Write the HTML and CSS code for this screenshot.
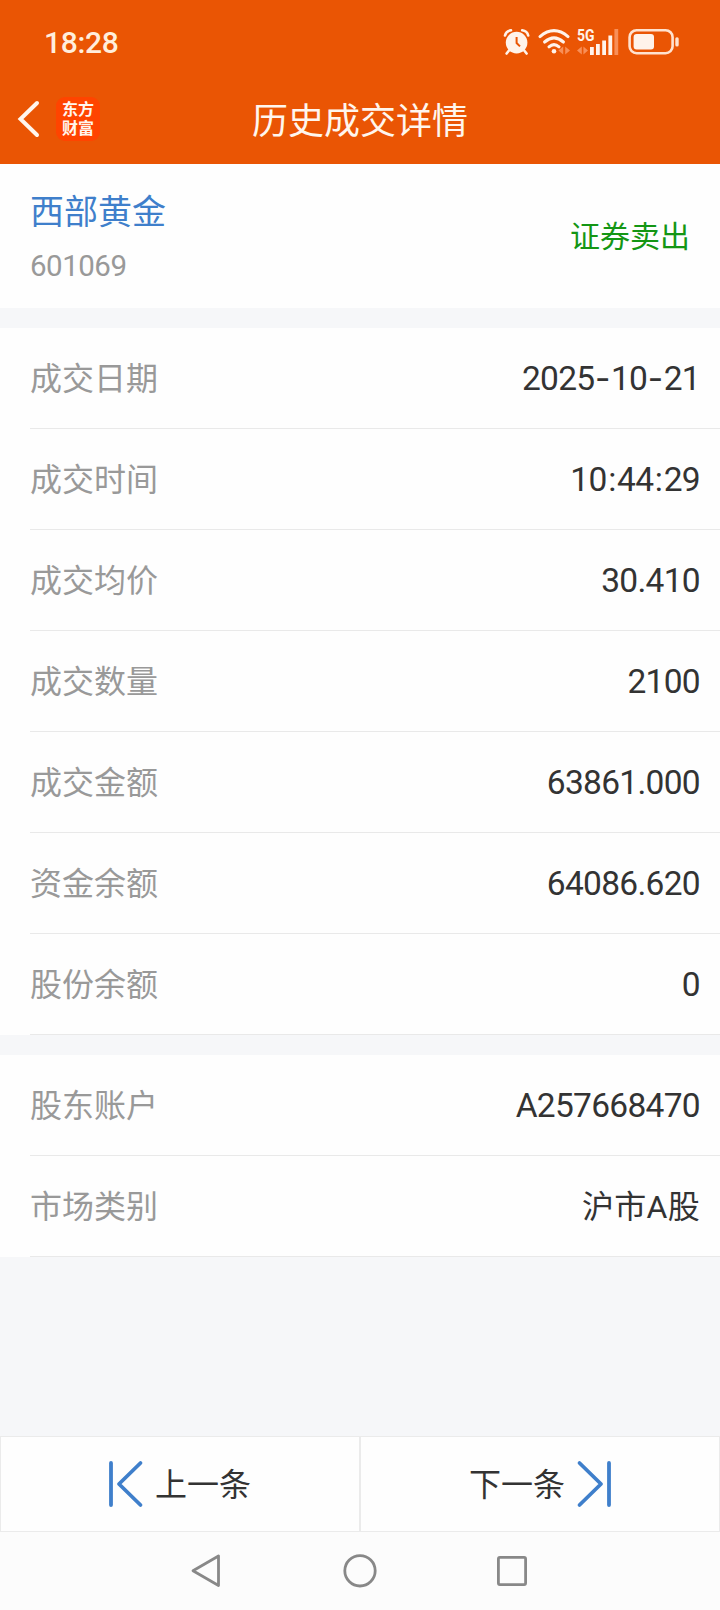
FILE: index.html
```html
<!DOCTYPE html>
<html lang="zh-CN">
<head>
	<meta charset="utf-8">
	<title>历史成交详情</title>
	<link rel="stylesheet" href="styles.css">
</head>
<body>
	<div class="header">
		<div class="status">
			<span class="time">18:28</span>
			<svg class="alarm" width="27" height="28" viewBox="0 0 27 28">
				<circle cx="13.6" cy="14.6" r="10.8" fill="#fff3ea"/>
				<path d="M2 7.5Q3 3 8 2.3M19.2 2.3Q24.2 3 25.2 7.5M6 22.5L3.6 25.5M21.2 22.5L23.6 25.5" fill="none" stroke="#fff3ea" stroke-width="2.6" stroke-linecap="round"/>
				<path d="M13.6 9V15L17 18.4" fill="none" stroke="#ea5504" stroke-width="2"/>
			</svg>
			<svg class="wifi" width="32" height="28" viewBox="0 0 32 28">
				<path d="M2 8.6Q16 -3.2 30 8.6M6.6 14Q16 5.8 25.4 14M11 18.8Q16 14.4 21 18.8" fill="none" stroke="#fff3ea" stroke-width="3.1" stroke-linecap="round"/>
				<circle cx="16" cy="23.2" r="2.3" fill="#fff3ea"/>
				<path d="M25.2 18.5V26.5L20.4 22.5ZM27.2 18.5V26.5L32 22.5Z" fill="#f88f58"/>
			</svg>
			<svg class="signal" width="44" height="28" viewBox="0 0 44 28">
				<text class="net" x="1" y="13.4" textLength="17.5" lengthAdjust="spacingAndGlyphs">5G</text>
				<path d="M5.8 18.5V26.5L1 22.5ZM7.4 18.5V26.5L12 22.5Z" fill="#f88f58"/>
				<path d="M14 19h3.8v8H14zM20 16h3.8v11H20zM26.2 12.4H30V27h-3.8zM32.4 7.6h3.8V27h-3.8z" fill="#fff3ea"/>
				<path d="M38.4 1h3.8v26h-3.8z" fill="#f88f58"/>
			</svg>
			<svg class="battery" width="52" height="28" viewBox="0 0 52 28">
				<rect x="1.6" y="2.2" width="43" height="23" rx="7" fill="none" stroke="#ffe2cf" stroke-width="2.6"/>
				<rect x="5.6" y="6" width="20.4" height="15.6" rx="3" fill="#fff3ea"/>
				<rect x="47.3" y="9.2" width="3.4" height="9.4" rx="1.6" fill="#ffe2cf"/>
			</svg>
		</div>
		<div class="navbar">
			<div class="left">
				<svg width="24" height="40" viewBox="0 0 24 40">
					<path d="M21 4L4.5 20L21 36" fill="none" stroke="#fff6ee" stroke-width="4" stroke-linecap="round"/>
				</svg>
				<div class="logo">东方<br>财富</div>
			</div>
			<div class="title">历史成交详情</div>
		</div>
	</div>

	<div class="stock">
		<div>
			<div class="name">西部黄金</div>
			<div class="code">601069</div>
		</div>
		<div class="side">证券卖出</div>
	</div>

	<div class="group">
		<div class="row"><span class="label">成交日期</span><span class="value">2025<span class="dash">-</span>10<span class="dash">-</span>21</span></div>
		<div class="row"><span class="label">成交时间</span><span class="value">10<span class="colon">:</span>44<span class="colon">:</span>29</span></div>
		<div class="row"><span class="label">成交均价</span><span class="value">30.410</span></div>
		<div class="row"><span class="label">成交数量</span><span class="value">2100</span></div>
		<div class="row"><span class="label">成交金额</span><span class="value">63861.000</span></div>
		<div class="row"><span class="label">资金余额</span><span class="value">64086.620</span></div>
		<div class="row"><span class="label">股份余额</span><span class="value">0</span></div>
	</div>

	<div class="group">
		<div class="row"><span class="label">股东账户</span><span class="value">A257668470</span></div>
		<div class="row"><span class="label">市场类别</span><span class="value market">沪市A股</span></div>
	</div>

	<div class="pager">
		<div class="btn">
			<svg width="34" height="48" viewBox="0 0 34 48">
				<path d="M2 3V45M31.5 3L10 24L31.5 45" fill="none" stroke="#3f7fcb" stroke-width="3.8" stroke-linecap="round" stroke-linejoin="round"/>
			</svg>
			<span>上一条</span>
		</div>
		<div class="btn">
			<span>下一条</span>
			<svg width="34" height="48" viewBox="0 0 34 48">
				<path d="M32 3V45M2.5 3L24 24L2.5 45" fill="none" stroke="#3f7fcb" stroke-width="3.8" stroke-linecap="round" stroke-linejoin="round"/>
			</svg>
		</div>
	</div>

	<div class="keys">
		<svg width="34" height="34" viewBox="0 0 34 34">
			<path d="M28.5 2V31.5L3 16.8Z" fill="none" stroke="#888" stroke-width="2.8" stroke-linejoin="round"/>
		</svg>
		<svg width="34" height="34" viewBox="0 0 34 34">
			<circle cx="17" cy="16.8" r="15.2" fill="none" stroke="#888" stroke-width="2.8"/>
		</svg>
		<svg width="34" height="34" viewBox="0 0 34 34">
			<rect x="2.4" y="3.4" width="27.2" height="27.2" rx="1.5" fill="none" stroke="#888" stroke-width="2.8"/>
		</svg>
	</div>
</body>
</html>
```
FILE: styles.css
```css
* {
	box-sizing: border-box;
}
body {
	margin: 0;
	width: 720px;
	height: 1610px;
	display: flex;
	flex-direction: column;
	background: #f6f7f9;
	color: #333;
	font-family: "Noto Sans CJK SC", sans-serif;
	font-size: 32px;
}
svg {
	display: block;
	flex: none;
	overflow: visible;
}

/* header */
.header {
	height: 164px;
	background: #ea5504;
	color: #fff6ee;
}
.status {
	height: 74px;
	padding: 10px 40px 0 44px;
	display: flex;
	align-items: center;
}
.time {
	margin-right: auto;
	font: 500 30px Roboto, sans-serif;
	letter-spacing: -0.3px;
	color: #ffeedd;
}
.wifi {
	margin-left: 8px;
}
.signal {
	margin-left: 6px;
}
.battery {
	margin-left: 8px;
}
.net {
	font: bold 16px Roboto, sans-serif;
	fill: #fff3ea;
}
.navbar {
	height: 90px;
	display: grid;
	grid-template-columns: 1fr auto 1fr;
	align-items: center;
}
.left {
	display: flex;
	align-items: center;
	gap: 16px;
	padding-left: 16px;
}
.logo {
	width: 44px;
	height: 44px;
	border-radius: 9px;
	background: #ff4400;
	text-align: center;
	font-size: 16px;
	font-weight: bold;
	line-height: 19px;
	padding-top: 2px;
}
.title {
	font-size: 36px;
	line-height: 50px;
	padding-bottom: 2px;
}

/* stock */
.stock {
	height: 144px;
	padding: 0 30px;
	display: flex;
	align-items: center;
	justify-content: space-between;
	background: #fefefe;
}
.name {
	font-size: 34px;
	line-height: 52px;
	color: #3f7fcb;
}
.code {
	padding-top: 4px;
	margin-bottom: -4px;
	font: 29.5px/52px Roboto, sans-serif;
	letter-spacing: -0.5px;
	color: #999;
}
.side {
	padding-bottom: 4px;
	font-size: 30px;
	color: #149614;
}

/* rows */
.group {
	margin-top: 20px;
	padding-left: 30px;
	background: #fefefe;
}
.row {
	height: 101px;
	padding-right: 20px;
	display: flex;
	align-items: center;
	justify-content: space-between;
	border-bottom: 1px solid #e9e9e9;
}
.label {
	padding-bottom: 4px;
	color: #999;
}
.value {
	font-family: Roboto, "Noto Sans CJK SC", sans-serif;
	font-size: 33.5px;
	letter-spacing: -0.7px;
}
.market {
	padding-bottom: 4px;
	font-size: 32px;
	letter-spacing: 0.3px;
}
.dash {
	display: inline-block;
	width: 16.5px;
	text-align: center;
	font-family: Inter, sans-serif;
	line-height: 1;
	letter-spacing: 0;
}
.colon {
	padding: 0 1.5px;
}

/* prev / next */
.pager {
	margin-top: auto;
	display: flex;
}
.btn {
	flex: 1;
	height: 96px;
	display: flex;
	align-items: center;
	justify-content: center;
	gap: 12px;
	background: #fefefe;
	border: 1px solid #ebebeb;
}
.btn span {
	padding-bottom: 4px;
}

/* system keys */
.keys {
	height: 78px;
	display: flex;
	align-items: center;
	justify-content: center;
	gap: 119px;
	background: #fcfcfc;
}
```
